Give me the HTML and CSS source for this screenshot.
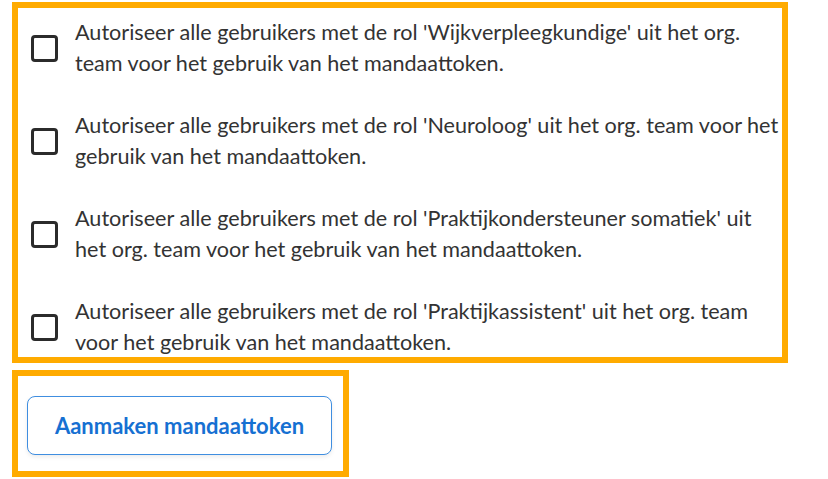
FILE: index.html
```html
<!DOCTYPE html>
<html lang="nl">
<head>
    <meta charset="UTF-8">
    <meta name="viewport" content="width=device-width, initial-scale=1.0">
    <title>Mandaattoken aanmaken</title>
    <link rel="stylesheet" href="styles.css">
</head>
<body>

    <!-- Rollen die het mandaattoken mogen gebruiken -->
    <div class="highlight roles">
        <label class="role">
            <input type="checkbox" class="role-check">
            <span class="role-text">Autoriseer alle gebruikers met de rol 'Wijkverpleegkundige' uit het org. team voor het gebruik van het mandaattoken.</span>
        </label>
        <label class="role">
            <input type="checkbox" class="role-check">
            <span class="role-text">Autoriseer alle gebruikers met de rol 'Neuroloog' uit het org. team voor het gebruik van het mandaattoken.</span>
        </label>
        <label class="role">
            <input type="checkbox" class="role-check">
            <span class="role-text">Autoriseer alle gebruikers met de rol 'Praktijkondersteuner somatiek' uit het org. team voor het gebruik van het mandaattoken.</span>
        </label>
        <label class="role">
            <input type="checkbox" class="role-check">
            <span class="role-text">Autoriseer alle gebruikers met de rol 'Praktijkassistent' uit het org. team voor het gebruik van het mandaattoken.</span>
        </label>
    </div>

    <div class="highlight actions">
        <button class="create-button">Aanmaken mandaattoken</button>
    </div>

</body>
</html>
```

FILE: styles.css
```css
body {
    font-family: Lato, "Open Sans", sans-serif;
    margin: 0;
    padding: 2px 0 0 12px;
    background: #fff;
    color: #333;
}

.highlight {
    border: 6px solid #ffab00;
    box-sizing: border-box;
}

.roles {
    width: 776px;
    height: 361px;
    padding: 9px 0 0 13px;
    display: flex;
    flex-direction: column;
    gap: 31px;
}

.role {
    display: flex;
    align-items: center;
    gap: 17px;
    font-size: 21.6px;
    line-height: 31px;
    cursor: pointer;
}

.role-check {
    appearance: none;
    flex: none;
    width: 27px;
    height: 27px;
    margin: 0;
    border: 3px solid #2b2b2b;
    border-radius: 4px;
    background: #fff;
}

.role-text {
    flex: 1;
}

.actions {
    width: 337px;
    height: 107px;
    margin-top: 7px;
    padding: 20px 0 0 9px;
}

.create-button {
    width: 305px;
    height: 59px;
    background: #fff;
    border: 1.5px solid #3f8ee0;
    border-radius: 8px;
    box-shadow: 0 2px 4px rgba(0, 0, 0, 0.08);
    color: #1670d2;
    font-family: Lato, sans-serif;
    font-size: 22px;
    font-weight: bold;
    cursor: pointer;
}

    .create-button:hover {
        background: #f3f8fe;
    }
```
